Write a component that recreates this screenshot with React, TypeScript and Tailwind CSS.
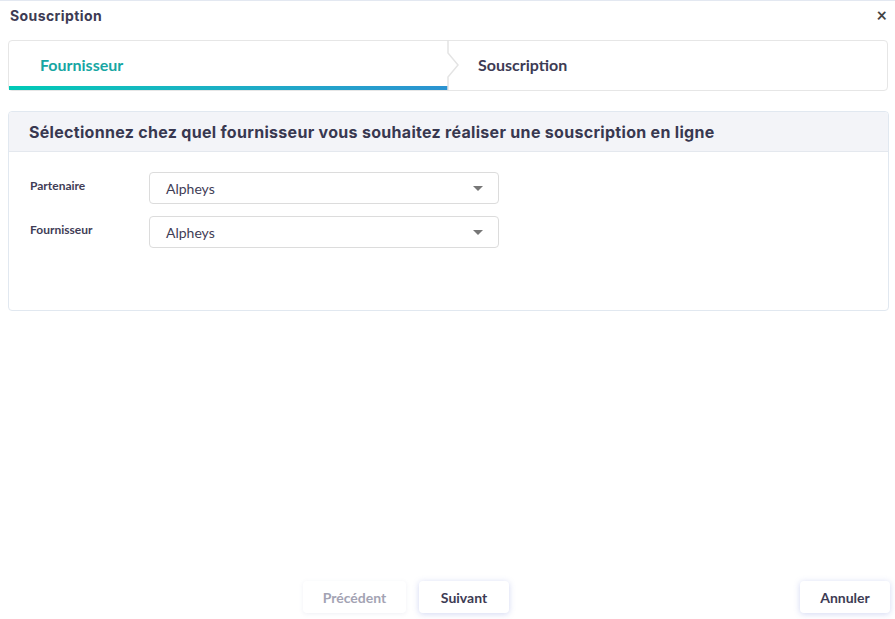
import React from "react";

const poppins = { fontFamily: "Inter, 'DejaVu Sans', sans-serif" };

function Select({ value }: { value: string }) {
  return (
    <div className="w-[350px] h-[32px] border border-[#dcdcdc] rounded-[4px] bg-white flex items-center justify-between pl-[16px] pr-[15px]">
      <span className="text-[14px] text-[#3f3d56]">{value}</span>
      <svg width="10" height="5" viewBox="0 0 10 5">
        <path d="M0 0 L10 0 L5 5 Z" fill="#777" />
      </svg>
    </div>
  );
}

export default function App() {
  return (
    <div
      className="w-[895px] h-[619px] bg-white border-t border-[#e3e8f1] flex flex-col"
      style={{ fontFamily: "Lato, 'Open Sans', sans-serif" }}
    >
      {/* titre */}
      <div className="h-[28px] flex items-center justify-between pl-[10px] pr-[8px]">
        <span className="text-[14px] font-bold text-[#3d3b54] tracking-[0.4px]" style={poppins}>
          Souscription
        </span>
        <span className="text-[18px] font-bold text-[#444] leading-none">×</span>
      </div>

      {/* étapes */}
      <div className="mt-[11px] ml-[8px] mr-[7px] h-[51px] border border-[#e6e6e6] rounded-[4px] flex">
        <div className="w-[439px] shrink-0 relative flex flex-col">
          <div className="flex-1 flex items-center pl-[31px] pt-[3px]">
            <span className="text-[16px] font-bold text-[#17a6a3]">Fournisseur</span>
          </div>
          <div className="h-[4px] bg-gradient-to-r from-[#00c9b6] to-[#2b93d1]" />
          <svg className="absolute right-[-12px] top-[-1px]" width="13" height="51" viewBox="0 0 13 51">
            <path d="M1 0 L1 13 L11 25 L1 37 L1 51" fill="none" stroke="#e4e4e4" strokeWidth="1.5" />
          </svg>
        </div>
        <div className="flex-1 flex items-center pl-[30px] pb-[1px]">
          <span className="text-[16px] font-bold text-[#3d3b54]">Souscription</span>
        </div>
      </div>

      {/* panneau */}
      <div className="mt-[20px] ml-[8px] mr-[6px] h-[200px] border border-[#e1e8f0] rounded-[4px] flex flex-col">
        <div className="h-[40px] bg-[#f3f4f8] border-b border-[#e4e8ee] flex items-center pl-[20px] rounded-t-[4px]">
          <span className="text-[16px] font-bold text-[#383850] tracking-[0.3px]" style={poppins}>
            Sélectionnez chez quel fournisseur vous souhaitez réaliser une souscription en ligne
          </span>
        </div>
        <div className="flex flex-col gap-[12px] pt-[20px] pl-[21px]">
          <div className="flex items-start">
            <span className="w-[119px] pt-[5px] text-[12px] font-bold text-[#3f3d56]">Partenaire</span>
            <Select value="Alpheys" />
          </div>
          <div className="flex items-start">
            <span className="w-[119px] pt-[5px] text-[12px] font-bold text-[#3f3d56]">Fournisseur</span>
            <Select value="Alpheys" />
          </div>
        </div>
      </div>

      {/* pied */}
      <div className="mt-auto mb-[6px] flex items-center">
        <div className="flex-1 flex justify-center gap-[13px] pl-[12px]">
          <button className="w-[103px] h-[32px] rounded-[4px] bg-white text-[14px] font-bold text-[#a3a3b3] shadow-[0_1px_4px_rgba(120,130,170,0.12)]">
            Précédent
          </button>
          <button className="w-[90px] h-[32px] rounded-[4px] bg-white text-[14px] font-bold text-[#3d3b54] shadow-[0_1px_6px_rgba(90,110,210,0.28)]">
            Suivant
          </button>
        </div>
        <button className="w-[90px] h-[32px] mr-[5px] rounded-[4px] bg-white text-[14px] font-bold text-[#3d3b54] shadow-[0_1px_6px_rgba(90,110,210,0.28)]">
          Annuler
        </button>
      </div>
    </div>
  );
}
